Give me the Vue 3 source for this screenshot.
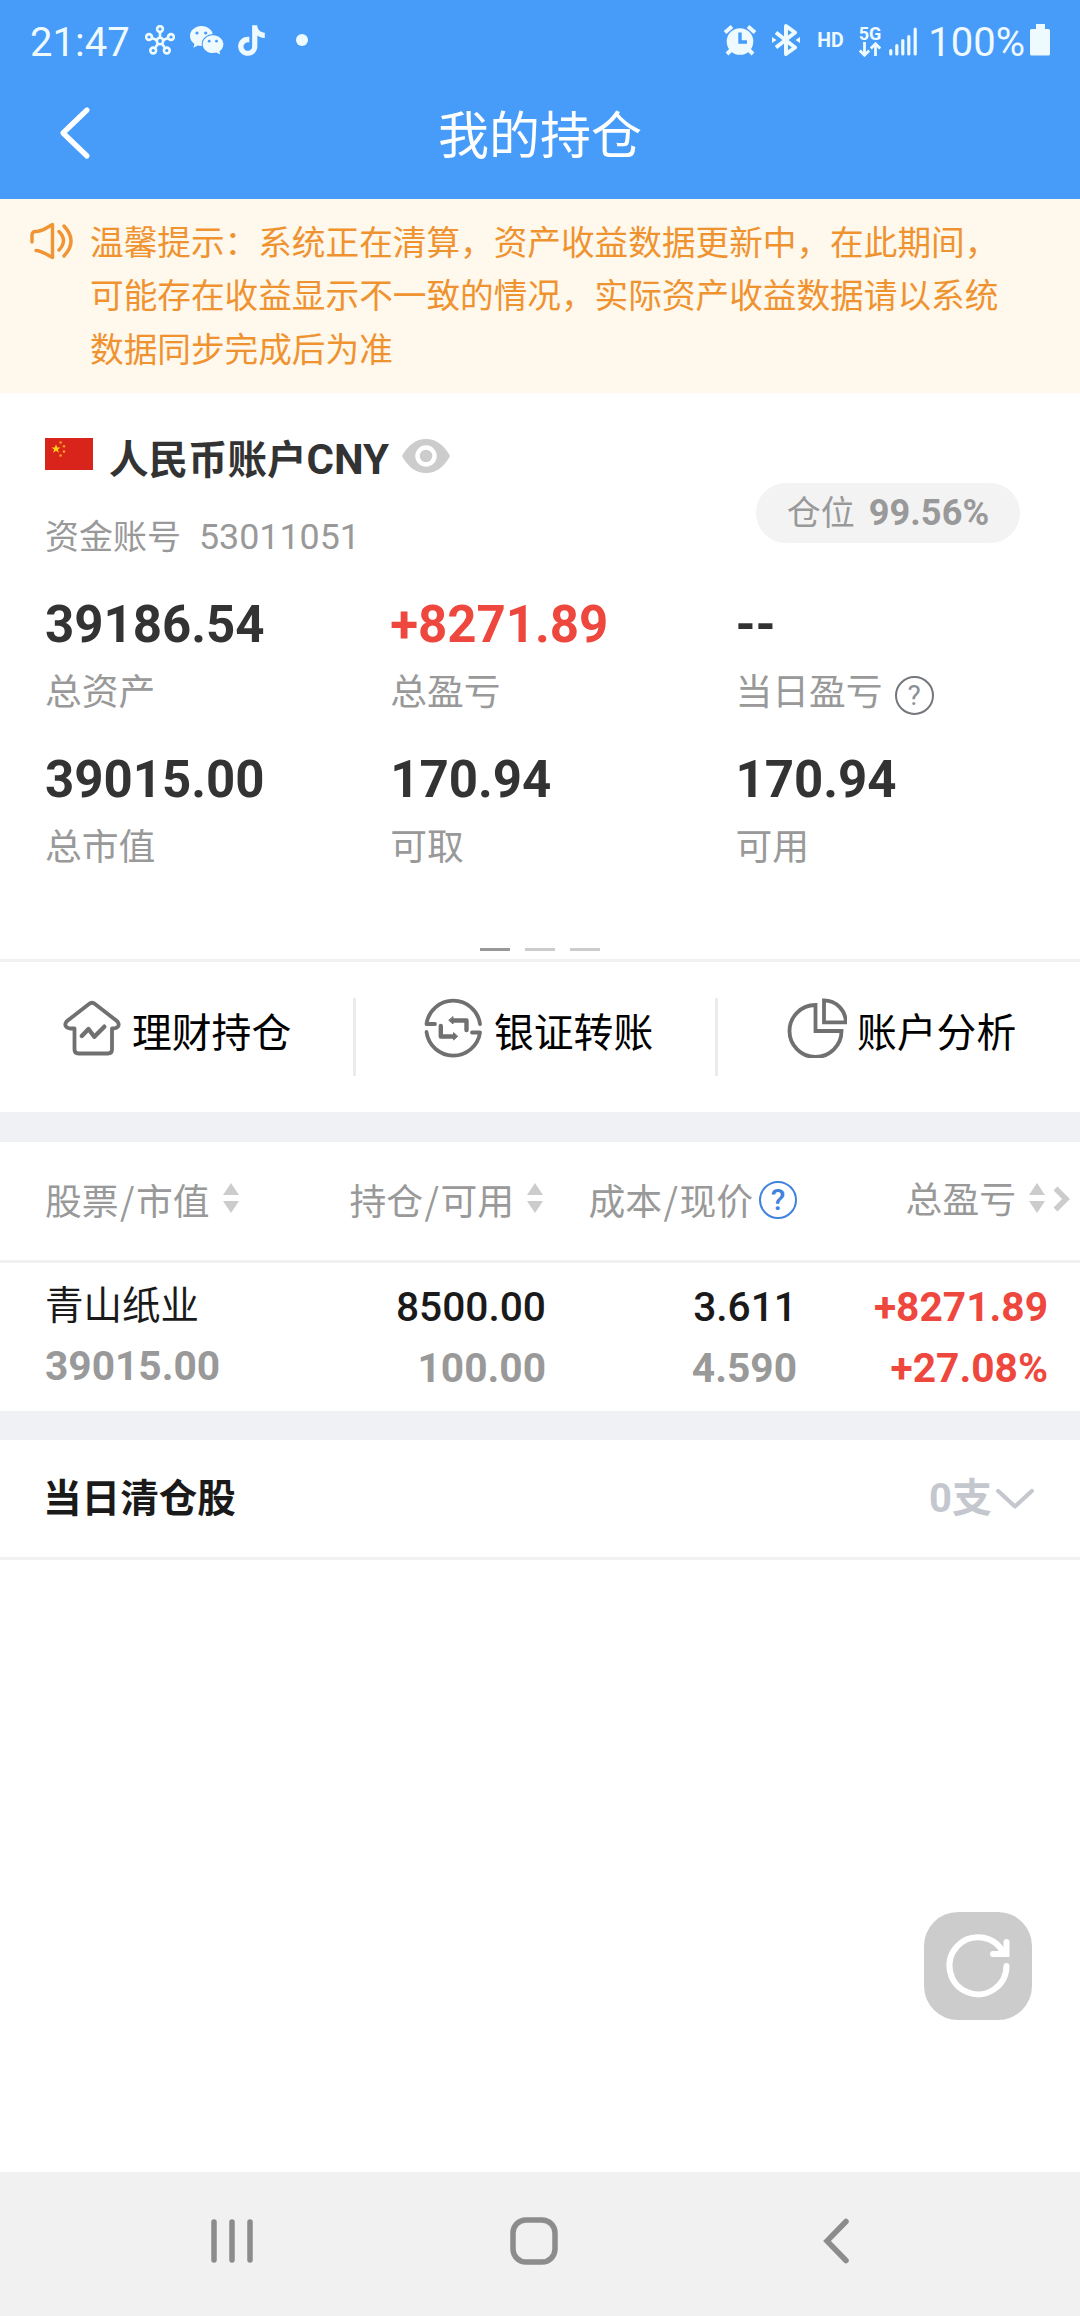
<template>
  <div class="page">
    <header class="header">
      <div class="status-bar">
        <div class="status-left">
          <span class="time">21:47</span>
          <svg class="icon-net" viewBox="0 0 30 31" width="30" height="31" fill="none" stroke="currentColor" stroke-width="2.6">
            <circle cx="15" cy="16" r="3.2" />
            <circle cx="15" cy="4" r="2.9" />
            <circle cx="4" cy="12" r="2.9" />
            <circle cx="26" cy="12" r="2.9" />
            <circle cx="8.2" cy="25.5" r="2.9" />
            <circle cx="21.8" cy="25.5" r="2.9" />
            <path d="M15 7v6M6.8 13l5 2M23.2 13l-5 2M10 23l3-4.2M20 23l-3-4.2" />
          </svg>
          <svg class="icon-wechat" viewBox="0 0 34 30" width="34" height="30">
            <path fill="currentColor" d="M11.5 1C5.2 1 0 5.4 0 11c0 3.2 1.7 6 4.4 7.9l-1 3.9 4.4-2.3c1.2.3 2.4.5 3.7.5C17.9 21 23 16.6 23 11S17.9 1 11.5 1z" />
            <ellipse cx="23" cy="19" rx="11.3" ry="10" fill="#469cf8" />
            <path fill="currentColor" d="M23 10.2c-5.7 0-10.3 4-10.3 9s4.6 8.9 10.3 8.9c1.2 0 2.4-.2 3.5-.5l3.7 2-.7-3.300c2.300-1.700 3.900-4.300 3.900-7.100 0-5-4.700-9-10.400-9z" />
            <g fill="#469cf8">
              <circle cx="7" cy="8" r="1.6" />
              <circle cx="15.7" cy="8" r="1.6" />
              <circle cx="19.2" cy="16.2" r="1.4" />
              <circle cx="26.5" cy="16.2" r="1.4" />
            </g>
          </svg>
          <svg class="icon-note" viewBox="1.4 0 21.2 24" width="27" height="31">
            <path fill="currentColor" d="M12.525.02c1.31-.02 2.61-.01 3.91-.02.08 1.53.63 3.09 1.75 4.17 1.12 1.11 2.7 1.62 4.24 1.79v4.03c-1.44-.05-2.89-.35-4.2-.97-.57-.26-1.1-.59-1.62-.93-.01 2.92.01 5.84-.02 8.75-.08 1.4-.54 2.79-1.35 3.94-1.31 1.92-3.58 3.17-5.91 3.21-1.43.08-2.86-.31-4.08-1.03-2.02-1.19-3.44-3.37-3.65-5.71-.02-.5-.03-1-.01-1.49.18-1.9 1.12-3.72 2.58-4.96 1.66-1.44 3.98-2.13 6.15-1.72.02 1.48-.04 2.96-.04 4.44-.99-.32-2.15-.23-3.02.37-.63.41-1.11 1.04-1.36 1.75-.21.51-.15 1.07-.14 1.61.24 1.64 1.82 3.02 3.5 2.87 1.12-.01 2.19-.66 2.77-1.61.19-.33.4-.67.41-1.06.1-1.79.06-3.57.07-5.36.01-4.03-.01-8.05.02-12.07z" />
          </svg>
          <span class="more-dot"></span>
        </div>
        <div class="status-right">
          <svg viewBox="0 0 34 32" width="34" height="32">
            <circle cx="17" cy="17.5" r="13.3" fill="currentColor" />
            <path d="M2 8.5l7-6M32 8.5l-7-6" stroke="currentColor" stroke-width="4" fill="none" />
            <path d="M8 26l-4 4M26 26l4 4" stroke="currentColor" stroke-width="4" fill="none" />
            <path d="M17 8.5v9.5h7" stroke="#469cf8" stroke-width="3.4" fill="none" />
          </svg>
          <svg class="icon-bt" viewBox="0 0 28 32" width="28" height="32">
            <path d="M4 8.5L23 23.5 14 30V2l9 6.5L4 23.5" fill="none" stroke="currentColor" stroke-width="4" stroke-linejoin="round" />
            <path d="M0 13l4.500 3L0 19zM28 13l-4.500 3 4.500 3z" fill="currentColor" />
          </svg>
          <span class="hd">HD</span>
          <div class="network">
            <span>5G</span>
            <svg viewBox="0 0 22 15" width="22" height="15" fill="none" stroke="currentColor" stroke-width="2.8">
              <path d="M5.500 0v13M.8 8.500l4.700 4.700 4.700-4.700M16.500 14V2M11.800 6.500l4.700-4.700 4.700 4.700" />
            </svg>
          </div>
          <svg class="icon-signal" viewBox="0 0 29 29" width="29" height="29" stroke="currentColor" stroke-width="3.2" stroke-linecap="round">
            <path d="M1.800 27v-3.500M7.800 27v-8.500M13.800 27V13.500M19.800 27V9.500M26.200 27V2" />
          </svg>
          <span class="percent">100%</span>
          <svg class="icon-battery" viewBox="0 0 20 32" width="20" height="32">
            <path d="M6 0h9v5h3.500Q20 5 20 6.500V30q0 1.500-1.500 1.500h-17Q0 31.500 0 30V6.500Q0 5 1.500 5H6z" fill="currentColor" />
          </svg>
        </div>
      </div>
      <div class="nav-bar">
        <svg class="nav-back" viewBox="0 0 32 54" width="32" height="54">
          <path d="M28 4L4 27l24 23" fill="none" stroke="#fff" stroke-width="5.2" stroke-linecap="round" stroke-linejoin="round" />
        </svg>
        <h1>我的持仓</h1>
      </div>
    </header>

    <!-- 清算提示 -->
    <div class="notice">
      <svg viewBox="0 0 44 40" width="44" height="40" fill="none" stroke="#f19434" stroke-width="3.4" stroke-linecap="round" stroke-linejoin="round">
        <path d="M2 21v-7q0-3.500 3.500-3.500c7 0 10-3.500 17-7v33c-6-3-11-7-16.500-7" />
        <path d="M29 10.500q9 9 0 18.500M34 5q14 15 0 30" />
      </svg>
      <p>{{ notice }}</p>
    </div>

    <!-- 账户概览 -->
    <section class="account">
      <div class="account-head">
        <div>
          <div class="account-title">
            <svg class="flag" viewBox="0 0 48 32" width="48" height="32">
              <rect width="48" height="32" fill="#d9241c" />
              <path d="M11 6.500l1.300 3h3.200l-2.600 2 1 3.200-2.900-1.900-2.900 1.900 1-3.200-2.600-2h3.200z" fill="#fbd116" />
              <g fill="#f0a01c">
                <circle cx="15.6" cy="4.5" r="1.3" />
                <circle cx="19" cy="8.2" r="1.3" />
                <circle cx="19" cy="13.6" r="1.3" />
                <circle cx="15.6" cy="17.5" r="1.3" />
              </g>
            </svg>
            <span class="account-name">人民币账户<span class="currency">CNY</span></span>
            <svg class="eye" viewBox="0 0 48 36" width="48" height="36">
              <path d="M0 18C6 7 14 1 24 1s18 6 24 17c-6 11-14 17-24 17S6 29 0 18z" fill="#ccc" />
              <circle cx="24" cy="18" r="8.5" fill="#ccc" stroke="#fff" stroke-width="4.5" />
            </svg>
          </div>
          <div class="account-no"><span>资金账号</span><span class="no">53011051</span></div>
        </div>
        <div class="position-pill"><span>仓位</span><b>99.56%</b></div>
      </div>

      <div class="stats">
        <div v-for="item in stats" :key="item.label" class="stat">
          <div class="stat-value" :class="{ up: item.up }">{{ item.value }}</div>
          <div class="stat-label">
            {{ item.label }}
            <span v-if="item.help" class="help">?</span>
          </div>
        </div>
      </div>

      <div class="pager">
        <i class="active"></i>
        <i></i>
        <i></i>
      </div>
    </section>

    <!-- 快捷入口 -->
    <nav class="actions">
      <div class="action">
        <svg viewBox="0 0 60 60" width="60" height="60">
          <path d="M12.500 30.500H8q-7-1.500-3.500-7L27 6q3-2.500 6 0l22.500 17.500q3.500 5.500-3.500 7h-2v21q0 4-4 4H16.500q-4 0-4-4z" />
          <path class="bold" d="M19.800 38l6.700-7 5.800 7.700 10-10" />
        </svg>
        <span>理财持仓</span>
      </div>
      <div class="action">
        <svg viewBox="2 0 60 60" width="60" height="60">
          <path d="M13 26H4.500a27 27 0 0 1 53.500 0" />
          <path d="M50 34.500h8a27 27 0 0 1-53.500-.5" />
          <path class="bold" d="M44.500 32V22.500H31M18.800 28v10.500H32" />
          <path class="head" d="M31 19v7l-4-3.500zM31.500 35v7l4-3.500z" />
        </svg>
        <span>银证转账</span>
      </div>
      <div class="action">
        <svg viewBox="0 0 60 60" width="60" height="60">
          <path class="sharp" d="M28.500 7a26 26 0 1 0 26 26h-26z" />
          <path class="sharp" d="M37 2.300A22 22 0 0 1 58.800 24.300H37z" />
        </svg>
        <span>账户分析</span>
      </div>
    </nav>

    <div class="band"></div>

    <!-- 持仓列表 -->
    <section class="holdings">
      <div class="row head-row">
        <div v-for="col in columns" :key="col.name" class="cell">
          <span>{{ col.name }}<template v-if="col.second"><i class="slash">/</i>{{ col.second }}</template></span>
          <span v-if="col.help" class="help blue">?</span>
          <svg v-else class="sort" viewBox="0 0 16 30" width="16" height="30" fill="#ccc">
            <path d="M8 0l8 12H0zM8 30l8-12H0z" />
          </svg>
        </div>
        <svg class="more" viewBox="0 0 18 26" width="18" height="26">
          <path d="M2.500 2.500L13 13 2.500 23.500" fill="none" stroke="#ccc" stroke-width="5.6" />
        </svg>
      </div>
      <div v-for="stock in stocks" :key="stock.name" class="row body-row">
        <div class="name-cell">
          <div class="stock-name">{{ stock.name }}</div>
          <div class="sub">{{ stock.marketValue }}</div>
        </div>
        <div class="num-cell">
          <div>{{ stock.amount }}</div>
          <div class="sub">{{ stock.available }}</div>
        </div>
        <div class="num-cell">
          <div>{{ stock.cost }}</div>
          <div class="sub">{{ stock.price }}</div>
        </div>
        <div class="num-cell up">
          <div>{{ stock.profit }}</div>
          <div>{{ stock.profitRate }}</div>
        </div>
      </div>
    </section>

    <div class="band thin"></div>

    <section class="closed">
      <span class="closed-title">当日清仓股</span>
      <span class="closed-count">0支</span>
      <svg viewBox="0 0 38 22" width="38" height="22">
        <path d="M2.200 3L19 18.500 35.800 3" fill="none" stroke="#c5c7ce" stroke-width="4.2" stroke-linecap="round" stroke-linejoin="round" />
      </svg>
    </section>

    <button class="refresh">
      <svg viewBox="0 0 108 108" width="108" height="108" fill="none" stroke="#fff" stroke-width="6" stroke-linecap="round">
        <path d="M82.500 54A28.500 28.500 0 1 1 79.500 41" />
        <path d="M69 42h13.500V30" />
      </svg>
    </button>

    <footer class="system-nav">
      <svg viewBox="0 0 42 44" width="42" height="44">
        <path d="M3 3v38M21 3v38M39 3v38" />
      </svg>
      <svg class="home" viewBox="0 0 48 48" width="48" height="48">
        <rect x="3" y="3" width="42" height="42" rx="13" />
      </svg>
      <svg viewBox="0 0 26 46" width="26" height="46">
        <path d="M23 3.500L4 23l19 19.500" />
      </svg>
    </footer>
  </div>
</template>

<script setup>
const notice = '温馨提示：系统正在清算，资产收益数据更新中，在此期间，可能存在收益显示不一致的情况，实际资产收益数据请以系统数据同步完成后为准'

const stats = [
  { label: '总资产', value: '39186.54' },
  { label: '总盈亏', value: '+8271.89', up: true },
  { label: '当日盈亏', value: '--', help: true },
  { label: '总市值', value: '39015.00' },
  { label: '可取', value: '170.94' },
  { label: '可用', value: '170.94' }
]

const columns = [
  { name: '股票', second: '市值' },
  { name: '持仓', second: '可用' },
  { name: '成本', second: '现价', help: true },
  { name: '总盈亏' }
]

const stocks = [
  {
    name: '青山纸业',
    marketValue: '39015.00',
    amount: '8500.00',
    available: '100.00',
    cost: '3.611',
    price: '4.590',
    profit: '+8271.89',
    profitRate: '+27.08%'
  }
]
</script>

<style>
body {
  margin: 0;
  background: #fff;
}
</style>

<style scoped>
.page {
  position: relative;
  display: flex;
  flex-direction: column;
  width: 1080px;
  height: 2316px;
  overflow: hidden;
  background: #fff;
  color: #333;
  font-family: Roboto, 'Noto Sans CJK SC', sans-serif;
  white-space: nowrap;
}

svg {
  display: block;
  flex-shrink: 0;
}

/* 顶部 */
.header {
  height: 199px;
  background: #469cf8;
  color: #fff;
}

.status-bar {
  display: flex;
  justify-content: space-between;
  height: 80px;
  padding: 0 30px;
  color: #effaff;
}

.status-left,
.status-right {
  display: flex;
  align-items: center;
}

.time,
.percent {
  margin-top: 6px;
  font-size: 40px;
  line-height: 80px;
}

.icon-net {
  margin-left: 15px;
}

.icon-wechat {
  margin-left: 15px;
}

.icon-note {
  margin-left: 14px;
}

.more-dot {
  width: 12px;
  height: 12px;
  margin-left: 31px;
  border-radius: 50%;
  background: #effaff;
}

.icon-bt {
  margin-left: 15px;
}

.hd {
  margin-left: 17px;
  font-size: 19.5px;
  font-weight: 700;
}

.network {
  margin: 2px 0 0 15px;
  font-size: 18px;
  font-weight: 700;
  line-height: 17px;
}

.icon-signal {
  margin: 3px 0 0 8px;
}

.percent {
  margin-left: 10px;
}

.icon-battery {
  margin-left: 5px;
}

.nav-bar {
  position: relative;
  display: flex;
  align-items: center;
  justify-content: center;
  height: 113px;
}

.nav-back {
  position: absolute;
  left: 59px;
  top: 26px;
}

.nav-bar h1 {
  margin: 0;
  font-size: 51px;
  font-weight: 400;
  line-height: 60px;
}

/* 提示 */
.notice {
  display: flex;
  height: 194px;
  box-sizing: border-box;
  padding: 18px 60px 0 30px;
  background: #fff8ec;
  color: #ef9331;
}

.notice svg {
  margin-top: 4px;
}

.notice p {
  width: 920px;
  margin: 0 0 0 16px;
  font-size: 33.65px;
  line-height: 53.3px;
  white-space: normal;
}

/* 账户 */
.account {
  display: flex;
  flex-direction: column;
  height: 566px;
  box-sizing: border-box;
  padding: 37px 0 8px 45px;
}

.account-head {
  display: flex;
  justify-content: space-between;
  height: 127px;
  padding-right: 60px;
}

.account-title {
  display: flex;
  align-items: center;
  height: 60px;
  font-size: 39.5px;
  font-weight: 700;
  line-height: 60px;
}

.account-name {
  margin-left: 16px;
}

.currency {
  font-size: 42px;
}

.flag {
  margin-top: -12px;
}

.eye {
  margin: -8px 0 0 13px;
}

.account-no {
  display: flex;
  gap: 18px;
  margin-top: 27px;
  color: #999;
  font-size: 34px;
  line-height: 40px;
}

.account-no .no {
  font-size: 35.8px;
}

.position-pill {
  display: flex;
  align-items: center;
  justify-content: center;
  gap: 14px;
  width: 264px;
  height: 60px;
  margin-top: 53px;
  border-radius: 30px;
  background: #f3f3f3;
  color: #999;
  font-size: 34px;
  line-height: 58px;
}

.position-pill b {
  font-size: 36.2px;
}

.stats {
  display: grid;
  grid-template-columns: repeat(3, 345.2px);
  grid-auto-rows: 155px;
  margin-top: 40px;
}

.stat-value {
  font-size: 51px;
  font-weight: 700;
  line-height: 56px;
}

.stat-label {
  display: flex;
  align-items: center;
  height: 44px;
  margin-top: 18px;
  color: #999;
  font-size: 36.8px;
  line-height: 44px;
}

.up {
  color: #ee473d;
}

.help {
  width: 35px;
  height: 35px;
  margin: 4px 0 0 12px;
  border: 2px solid #73777d;
  border-radius: 50%;
  color: #8b9097;
  font-size: 28px;
  line-height: 35px;
  text-align: center;
}

.help.blue {
  width: 34px;
  height: 34px;
  margin: -2px 0 0 6px;
  border: 2.5px solid #3f83dc;
  color: #3f83dc;
  font-size: 30px;
  font-weight: 500;
  line-height: 34px;
}

.pager {
  display: flex;
  justify-content: center;
  gap: 15px;
  margin: auto 45px 0 0;
}

.pager i {
  width: 30px;
  height: 3px;
  background: #ccc;
}

.pager i.active {
  background: #999;
}

/* 快捷入口 */
.actions {
  display: grid;
  grid-template-columns: 356px 362px 362px;
  height: 150px;
  border-top: 3px solid #f1f1f1;
  color: #000;
}

.action {
  display: flex;
  align-items: flex-start;
  box-sizing: border-box;
  height: 78px;
  margin-top: 36px;
  padding-left: 68px;
  border-right: 3px solid #ebebeb;
  font-size: 39.8px;
  line-height: 60px;
}

.action:first-child {
  padding-left: 62px;
}

.action:last-child {
  padding-left: 69px;
  border-right: 0;
}

.action svg {
  fill: none;
  stroke: #707070;
  stroke-width: 3.8;
  stroke-linecap: round;
  stroke-linejoin: round;
}

.action .bold {
  stroke-width: 4.4;
}

.action .sharp {
  stroke-linejoin: miter;
}

.action .head {
  fill: #707070;
  stroke-width: 1;
}

.action span {
  margin: 6px 0 0 10px;
}

.band {
  height: 30px;
  background: #f0f1f4;
}

.band.thin {
  height: 29px;
}

/* 列表 */
.row {
  display: grid;
  grid-template-columns: 200px 301px 251px 251px 32px;
  padding-left: 45px;
}

.head-row {
  align-items: center;
  height: 118px;
  border-bottom: 3px solid #f1f1f1;
  color: #999;
  font-size: 36.8px;
  line-height: 46px;
}

.cell {
  display: flex;
  align-items: center;
  justify-content: flex-end;
}

.cell:first-child {
  justify-content: flex-start;
}

.slash {
  margin: 0 1.5px;
  font-family: 'Noto Sans CJK SC', sans-serif;
  font-style: normal;
}

.sort {
  margin: -6px 3px 0 13px;
}

.more {
  margin: -4px 0 0 5px;
}

.body-row {
  height: 134px;
  padding-top: 14px;
  color: #1a1a1a;
  font-size: 40.7px;
  line-height: 61px;
}

.name-cell {
  margin-top: -1px;
}

.stock-name {
  height: 60px;
  font-size: 38.5px;
  line-height: 60px;
}

.num-cell {
  font-weight: 500;
  text-align: right;
}

.body-row .sub {
  color: #999;
  font-weight: 700;
}

.num-cell.up {
  color: #ee473d;
  font-weight: 700;
}

.closed {
  display: flex;
  align-items: center;
  height: 117px;
  padding: 0 46px 0 43px;
  border-bottom: 3px solid #f1f1f1;
  font-weight: 700;
  line-height: 60px;
}

.closed-title {
  color: #1a1a1a;
  font-size: 38.6px;
}

.closed-count {
  margin: 0 4px 0 auto;
  color: #c5c7ce;
  font-size: 40px;
}

.refresh {
  position: absolute;
  left: 924px;
  top: 1912px;
  width: 108px;
  height: 108px;
  padding: 0;
  border: 0;
  border-radius: 34px;
  background: #ccc;
}

/* 系统导航 */
.system-nav {
  display: flex;
  align-items: center;
  justify-content: space-between;
  height: 144px;
  box-sizing: border-box;
  margin-top: auto;
  padding: 0 231px 6px 211px;
  background: #f1f1f1;
}

.system-nav .home {
  margin-right: 8px;
}

.system-nav svg {
  fill: none;
  stroke: #8c8c8c;
  stroke-width: 5.5;
  stroke-linecap: round;
}
</style>
